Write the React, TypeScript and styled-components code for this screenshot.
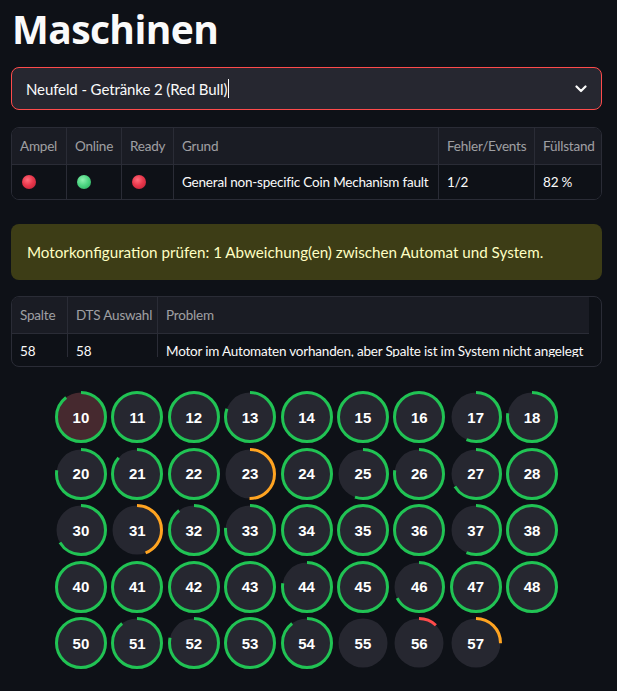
import React from "react";
import styled, { createGlobalStyle } from "styled-components";

const Global = createGlobalStyle`
  html, body { margin: 0; padding: 0; background: #0e1117; }
  body { font-family: "Lato", "Noto Sans", sans-serif; color: #fafafa; }
  * { box-sizing: border-box; }
`;

const Page = styled.div`
  width: 617px;
  min-height: 691px;
  padding: 0 15px 0 11px;
  display: flex;
  flex-direction: column;
`;

const Title = styled.h1`
  margin: 4px 0 0 1px;
  font-family: "Open Sans", "Noto Sans", sans-serif;
  font-weight: 700;
  font-size: 39px;
  line-height: 50px;
  letter-spacing: -0.6px;
  color: #fafafa;
`;

const Select = styled.div`
  margin-top: 13px;
  height: 43px;
  border: 1px solid #ff4b4b;
  border-radius: 8px;
  background: #262730;
  display: flex;
  align-items: center;
  padding: 0 14px 0 14px;
  font-size: 15px;
  letter-spacing: -0.1px;
  color: #fafafa;
`;

const SelectText = styled.span`
  flex: 1;
  display: flex;
  align-items: center;
`;

const Caret = styled.span`
  width: 1px;
  height: 19px;
  background: #fafafa;
  margin-left: 1px;
`;

const Frame = styled.div<{ $top: number }>`
  margin-top: ${(p) => p.$top}px;
  border: 1px solid #2a2c36;
  border-radius: 8px;
  overflow: hidden;
  background: #0e1117;
`;

const Row = styled.div<{ $cols: string; $head?: boolean; $h: number }>`
  display: grid;
  grid-template-columns: ${(p) => p.$cols};
  height: ${(p) => p.$h}px;
  background: ${(p) => (p.$head ? "#1a1c24" : "#0e1117")};
  border-bottom: ${(p) => (p.$head ? "1px solid #2a2c36" : "none")};
`;

const Cell = styled.div<{ $head?: boolean; $last?: boolean }>`
  display: flex;
  align-items: center;
  padding-left: 8px;
  white-space: nowrap;
  overflow: hidden;
  font-size: 13.5px;
  letter-spacing: -0.2px;
  color: ${(p) => (p.$head ? "rgba(250,250,250,0.6)" : "#fafafa")};
  border-right: ${(p) => (p.$last ? "none" : "1px solid #2a2c36")};
`;

const Dot = styled.span<{ $c: "red" | "green" }>`
  width: 14px;
  height: 14px;
  border-radius: 50%;
  margin-left: 2px;
  background: ${(p) =>
    p.$c === "red"
      ? "radial-gradient(circle at 40% 35%, #ff6d7c 0%, #e8384c 45%, #b81d33 100%)"
      : "radial-gradient(circle at 40% 35%, #8ff0b0 0%, #4fd784 45%, #24a857 100%)"};
`;

const Alert = styled.div`
  margin-top: 24px;
  height: 56px;
  border-radius: 8px;
  background: #3d3d16;
  color: #ffffc2;
  display: flex;
  align-items: center;
  padding-left: 16px;
  font-size: 15.2px;
`;

const Clip = styled.div`
  height: 60px;
  overflow: hidden;
  width: 577px;
`;

const Spacer = styled.div`
  height: 9px;
`;

const Grid = styled.div`
  margin: 24px auto 0;
  display: grid;
  grid-template-columns: repeat(9, 52px);
  column-gap: 4.4px;
  row-gap: 4.5px;
`;

const Slot = styled.div`
  position: relative;
  width: 52px;
  height: 52px;
  display: flex;
  align-items: center;
  justify-content: center;
  font-family: "Liberation Sans", Arial, sans-serif;
  font-weight: 700;
  font-size: 15px;
  color: #ffffff;
  svg { position: absolute; inset: 0; }
  span { position: relative; }
`;

const C = 2 * Math.PI * 24.5;

function SlotItem({ n, p, color, fill }: { n: number; p: number; color: string; fill: string }) {
  return (
    <Slot>
      <svg width="52" height="52" viewBox="0 0 52 52">
        <circle cx="26" cy="26" r="24.5" fill={fill} />
        {p > 0 && (
          <circle
            cx="26"
            cy="26"
            r="24.5"
            fill="none"
            stroke={color}
            strokeWidth="3"
            strokeDasharray={`${(p / 100) * C} ${C}`}
            transform="rotate(-90 26 26)"
          />
        )}
      </svg>
      <span>{n}</span>
    </Slot>
  );
}

const G = "#21c354";
const O = "#ffa421";
const R = "#ff4b4b";

const slots: { n: number; p: number; c?: string; f?: string }[] = [
  { n: 10, p: 89, f: "#46292f" }, { n: 11, p: 100 }, { n: 12, p: 100 }, { n: 13, p: 80 }, { n: 14, p: 100 },
  { n: 15, p: 100 }, { n: 16, p: 100 }, { n: 17, p: 56 }, { n: 18, p: 77 },
  { n: 20, p: 77 }, { n: 21, p: 86 }, { n: 22, p: 100 }, { n: 23, p: 50, c: O }, { n: 24, p: 100 },
  { n: 25, p: 55 }, { n: 26, p: 77 }, { n: 27, p: 66 }, { n: 28, p: 100 },
  { n: 30, p: 66 }, { n: 31, p: 44, c: O }, { n: 32, p: 89 }, { n: 33, p: 76 }, { n: 34, p: 100 },
  { n: 35, p: 100 }, { n: 36, p: 100 }, { n: 37, p: 56 }, { n: 38, p: 100 },
  { n: 40, p: 100 }, { n: 41, p: 100 }, { n: 42, p: 100 }, { n: 43, p: 100 }, { n: 44, p: 77 },
  { n: 45, p: 100 }, { n: 46, p: 67 }, { n: 47, p: 100 }, { n: 48, p: 100 },
  { n: 50, p: 100 }, { n: 51, p: 89 }, { n: 52, p: 78 }, { n: 53, p: 100 }, { n: 54, p: 89 },
  { n: 55, p: 0 }, { n: 56, p: 12, c: R }, { n: 57, p: 25, c: O },
];

const cols1 = "55px 55px 52px 265px 96px 1fr";
const cols2 = "56px 90px 1fr";

export default function App() {
  return (
    <>
      <Global />
      <Page>
        <Title>Maschinen</Title>
        <Select>
          <SelectText>
            Neufeld - Getränke 2 (Red Bull)
            <Caret />
          </SelectText>
          <svg width="12" height="8" viewBox="0 0 12 8">
            <path d="M1.5 1.5 L6 6 L10.5 1.5" fill="none" stroke="#fafafa" strokeWidth="2.2" strokeLinecap="round" strokeLinejoin="round" />
          </svg>
        </Select>

        <Frame $top={17}>
          <Row $cols={cols1} $head $h={37}>
            <Cell $head>Ampel</Cell>
            <Cell $head>Online</Cell>
            <Cell $head>Ready</Cell>
            <Cell $head>Grund</Cell>
            <Cell $head>Fehler/Events</Cell>
            <Cell $head $last>Füllstand</Cell>
          </Row>
          <Row $cols={cols1} $h={34}>
            <Cell><Dot $c="red" /></Cell>
            <Cell><Dot $c="green" /></Cell>
            <Cell><Dot $c="red" /></Cell>
            <Cell>General non-specific Coin Mechanism fault</Cell>
            <Cell>1/2</Cell>
            <Cell $last>82 %</Cell>
          </Row>
        </Frame>

        <Alert>Motorkonfiguration prüfen: 1 Abweichung(en) zwischen Automat und System.</Alert>

        <Frame $top={16}>
          <Clip>
            <Row $cols={cols2} $head $h={37}>
              <Cell $head>Spalte</Cell>
              <Cell $head>DTS Auswahl</Cell>
              <Cell $head $last>Problem</Cell>
            </Row>
            <Row $cols={cols2} $h={34}>
              <Cell>58</Cell>
              <Cell>58</Cell>
              <Cell $last>Motor im Automaten vorhanden, aber Spalte ist im System nicht angelegt</Cell>
            </Row>
          </Clip>
          <Spacer />
        </Frame>

        <Grid>
          {slots.map((s) => (
            <SlotItem key={s.n} n={s.n} p={s.p} color={s.c ?? G} fill={s.f ?? "#262730"} />
          ))}
        </Grid>
      </Page>
    </>
  );
}
